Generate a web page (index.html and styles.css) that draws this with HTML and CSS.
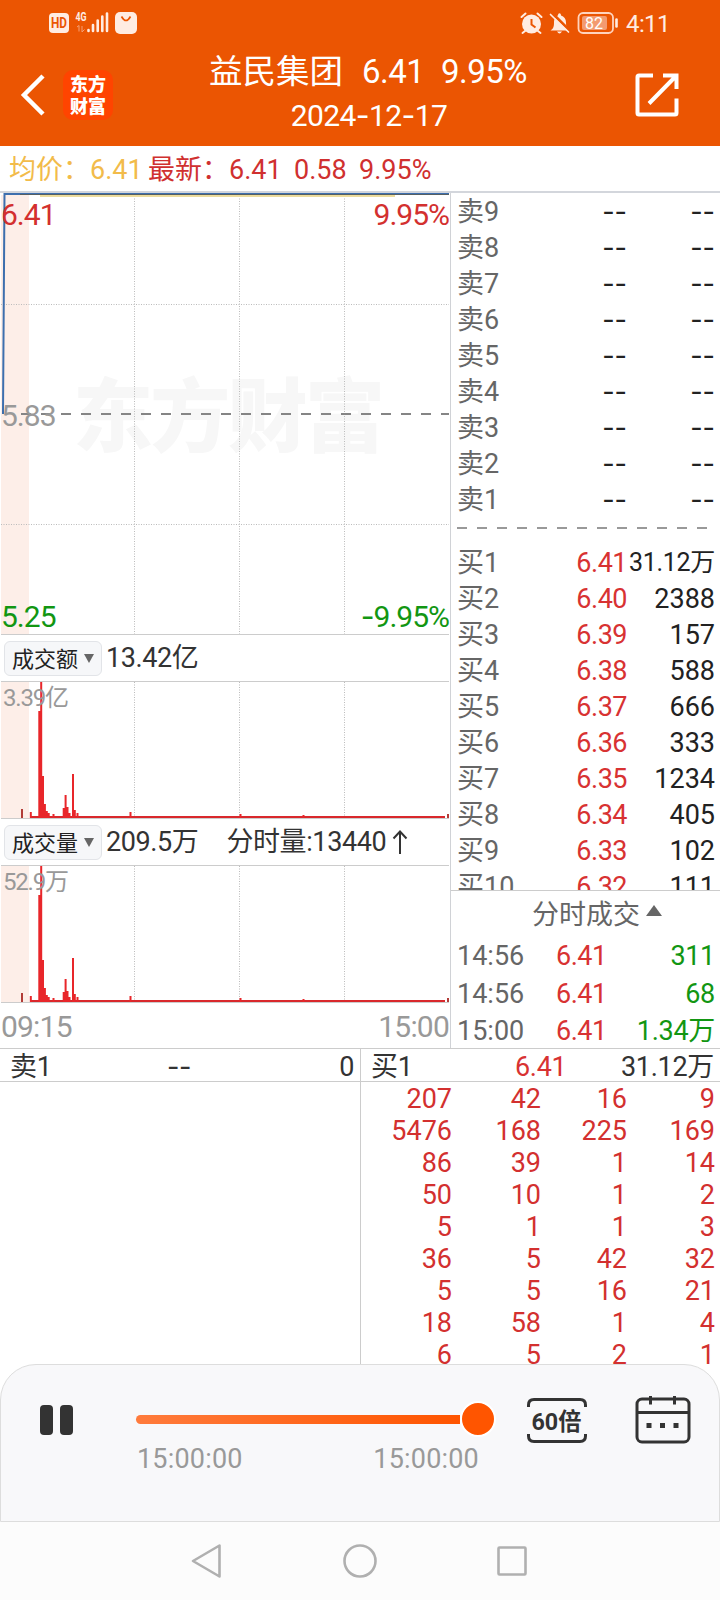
FILE: index.html
```
<!DOCTYPE html>
<html lang="zh-CN">
  <head>
    <meta charset="utf-8">
    <title>益民集团 6.41</title>
    <link rel="stylesheet" href="styles.css">
  </head>
  <body>
    <header>
      <div class="status">
        <svg width="90" height="24" viewBox="48 11 90 24">
          <rect x="49" y="13" width="20" height="20" rx="4" fill="#ffece2"/>
          <text x="51" y="28" class="hd" textLength="16" lengthAdjust="spacingAndGlyphs">HD</text>
          <text x="75.500" y="21" class="net" textLength="11" lengthAdjust="spacingAndGlyphs">4G</text>
          <path d="M77 27l2-1.500v6M82 26v6l2.500-2.500" stroke="#f4a077" fill="none"/>
          <path d="M88.500 30v1M93 25v6M97.700 20.500v10.500M102.300 16.500v14.500M107 13.500v17.500" stroke="#ffece2" stroke-width="2.600" stroke-linecap="round"/>
          <rect x="115" y="12" width="22" height="22" rx="5" fill="#ffece2"/>
          <path d="M121.500 16.500q4.500 8 9 0" stroke="#eb5502" stroke-width="1.600" fill="none"/>
        </svg>
        <svg width="98" height="24" viewBox="520 11 98 24">
          <circle cx="531.500" cy="24" r="9.500" fill="#ffece2"/>
          <path d="M521.500 17l4-3.500M541.500 17l-4-3.500M525 31l-2.500 2M538 31l2.500 2" stroke="#ffece2" stroke-width="2" stroke-linecap="round"/>
          <path d="M531.500 19v5.500l4 3" stroke="#eb5502" stroke-width="2" fill="none"/>
          <path d="M550.500 30.500c3-2 3.500-4 3.500-8 0-4 2-6.500 4-7 0-3 3-3 3 0 3 1 5 3.500 5 7s0.500 6 3 8zM557 31.500h5q-2.500 4-5 0z" fill="#ffece2"/>
          <path d="M551.500 12.500l18 18" stroke="#eb5502" stroke-width="3"/>
          <path d="M550.500 14.500l18 17.500" stroke="#ffece2" stroke-width="1.700" stroke-linecap="round"/>
          <rect x="578.500" y="13" width="34.500" height="20" rx="4.500" fill="none" stroke="#ffd3bd" stroke-width="1.800"/>
          <rect x="582" y="16" width="25" height="14" rx="2" fill="#f39a70"/>
          <text x="585" y="28.500" class="bat">82</text>
          <path d="M616.500 19.500v7" stroke="#ffece2" stroke-width="2.600" stroke-linecap="round"/>
        </svg>
        <span class="clock">4:11</span>
      </div>
      <div class="bar">
        <svg class="back" width="26" height="42" viewBox="0 0 26 42"><path d="M23 2L4 21l19 19" fill="none" stroke="#fff" stroke-width="4.500"/></svg>
        <div class="logo"><span>东方</span><span>财富</span></div>
        <div class="title">
          <div class="name"><span>益民集团</span><span>6.41</span><span>9.95%</span></div>
          <div class="date">2024<i>-</i>12<i>-</i>17</div>
        </div>
        <svg class="share" width="44" height="44" viewBox="0 0 44 44" fill="none" stroke="#fff" stroke-width="4">
          <path d="M18 2.500H4q-1.500 0-1.500 1.500v36q0 1.500 1.500 1.500h36q1.500 0 1.500-1.500V25.500M28 2.500h13.500V16M41 3L14 30.500"/>
        </svg>
      </div>
    </header>

    <div class="info">
      <span class="avg">均价：</span><span class="avg num1">6.41</span>
      <span class="last">最新：</span><span class="num2">6.41</span><span class="num3">0.58</span><span>9.95%</span>
    </div>

    <main>
      <section class="charts">
        <svg class="price" width="450" height="442" viewBox="0 193 450 442">
          <text x="73" y="445" class="mark" textLength="312">东方财富</text>
          <rect x="1" y="195" width="28" height="439" fill="#fdeee8"/>
          <path class="grid" d="M134.500 196v438M239.500 196v438M344.500 196v438M1 304.500h448M1 524.500h448"/>
          <path d="M21 414h428" stroke="#858585" stroke-width="2" stroke-dasharray="10 10"/>
          <path d="M40 196h355" stroke="#eddc9c" stroke-width="2"/>
          <path d="M3 414L4.500 194H449" stroke="#3d6fae" stroke-width="2" fill="none"/>
          <path d="M20 194.500H449" stroke="#555f63" stroke-width="1"/>
          <text x="1" y="225" class="up">6.41</text>
          <text x="449" y="225" class="up" text-anchor="end">9.95%</text>
          <text x="1" y="426" class="flat">5.83</text>
          <text x="1" y="627" class="down">5.25</text>
          <text x="449" y="627" class="down" text-anchor="end"><tspan class="dash">-</tspan>9.95%</text>
          <path d="M1 634.500h448" stroke="#ccc"/>
        </svg>
        <div class="head"><button>成交额<b></b></button><span>13.42亿</span></div>
        <svg width="450" height="138" viewBox="0 0 450 138">
          <defs>
            <g id="vol">
              <rect x="1" y="0" width="28" height="137" fill="#fdeee8"/>
              <path class="grid" d="M134.500 1v136M239.500 1v136M344.500 1v136"/>
              <path d="M1 .5h448M1 137.500h448" stroke="#ccc"/>
              <path d="M30 136H445" stroke="#d9282c" stroke-width="2"/>
              <path d="M30.800 137v-6M39.300 137v-107M41.200 137V1M43 137V95M44.900 137v-14M46.800 137v-7M48.700 137v-5M53.500 137v-4M63.700 137v-10M65.600 137v-23M67.500 137v-11M69.500 137v-5M73 137v-44M74.800 137v-8M77.500 137v-5M130.500 137v-6M240.500 137v-4M303.500 137v-3" stroke="#e8262a" stroke-width="2"/>
              <path d="M22 137v-9M448 137v-4" stroke="#b23c38" stroke-width="2"/>
            </g>
          </defs>
          <use href="#vol"/>
          <text x="3" y="25" class="max" textLength="66">3.39亿</text>
        </svg>
        <div class="head"><button>成交量<b></b></button><span>209.5万</span><span class="tick">分时量:13440<svg width="16" height="26" viewBox="0 0 16 26"><path d="M8 25V3M1.500 9.500L8 2.500l6.500 7" fill="none" stroke="#333" stroke-width="2"/></svg></span></div>
        <svg width="450" height="138" viewBox="0 0 450 138">
          <use href="#vol"/>
          <text x="3" y="25" class="max" textLength="66">52.9万</text>
        </svg>
        <div class="axis"><span>09:15</span><span>15:00</span></div>
      </section>

      <section class="book">
        <div class="levels">
          <div class="row"><span>卖9</span><i>--</i><i>--</i></div>
          <div class="row"><span>卖8</span><i>--</i><i>--</i></div>
          <div class="row"><span>卖7</span><i>--</i><i>--</i></div>
          <div class="row"><span>卖6</span><i>--</i><i>--</i></div>
          <div class="row"><span>卖5</span><i>--</i><i>--</i></div>
          <div class="row"><span>卖4</span><i>--</i><i>--</i></div>
          <div class="row"><span>卖3</span><i>--</i><i>--</i></div>
          <div class="row"><span>卖2</span><i>--</i><i>--</i></div>
          <div class="row"><span>卖1</span><i>--</i><i>--</i></div>
          <div class="split"></div>
          <div class="row"><span>买1</span><em>6.41</em><b class="small">31.12万</b></div>
          <div class="row"><span>买2</span><em>6.40</em><b>2388</b></div>
          <div class="row"><span>买3</span><em>6.39</em><b>157</b></div>
          <div class="row"><span>买4</span><em>6.38</em><b>588</b></div>
          <div class="row"><span>买5</span><em>6.37</em><b>666</b></div>
          <div class="row"><span>买6</span><em>6.36</em><b>333</b></div>
          <div class="row"><span>买7</span><em>6.35</em><b>1234</b></div>
          <div class="row"><span>买8</span><em>6.34</em><b>405</b></div>
          <div class="row"><span>买9</span><em>6.33</em><b>102</b></div>
          <div class="row"><span>买10</span><em>6.32</em><b>111</b></div>
        </div>
        <div class="deals">
          <div class="deals-title">分时成交<b></b></div>
          <div class="deal"><span>14:56</span><em>6.41</em><b>311</b></div>
          <div class="deal"><span>14:56</span><em>6.41</em><b>68</b></div>
          <div class="deal"><span>15:00</span><em>6.41</em><b>1.34万</b></div>
        </div>
      </section>
    </main>

    <div class="queue">
      <div class="sell">
        <div class="queue-head"><span>卖1</span><i>--</i><b>0</b></div>
      </div>
      <div class="buy">
        <div class="queue-head"><span>买1</span><em>6.41</em><b>31.12万</b></div>
        <div class="cells">
          <span>207</span><span>42</span><span>16</span><span>9</span>
          <span>5476</span><span>168</span><span>225</span><span>169</span>
          <span>86</span><span>39</span><span>1</span><span>14</span>
          <span>50</span><span>10</span><span>1</span><span>2</span>
          <span>5</span><span>1</span><span>1</span><span>3</span>
          <span>36</span><span>5</span><span>42</span><span>32</span>
          <span>5</span><span>5</span><span>16</span><span>21</span>
          <span>18</span><span>58</span><span>1</span><span>4</span>
          <span>6</span><span>5</span><span>2</span><span>1</span>
        </div>
      </div>
    </div>

    <div class="player">
      <div class="pause"><b></b><b></b></div>
      <div class="progress">
        <div class="slider"><div class="track"></div><div class="thumb"></div></div>
        <div class="times"><span>15:00:00</span><span>15:00:00</span></div>
      </div>
      <svg class="speed" width="60" height="48" viewBox="0 0 60 48">
        <path d="M1.500 10V8q0-5.500 5.500-5.500h46q5.500 0 5.500 5.500v2M1.500 37v2q0 5.500 5.500 5.500h46q5.500 0 5.500-5.500v-2" fill="none" stroke="#333" stroke-width="3"/>
        <text x="4.500" y="33" textLength="50" lengthAdjust="spacingAndGlyphs">60倍</text>
      </svg>
      <svg class="calendar" width="56" height="50" viewBox="0 0 56 50" fill="none" stroke="#333" stroke-width="3">
        <rect x="2" y="4" width="52" height="43" rx="5"/>
        <path d="M2 17.500h52M15.500 1v8.500M39.500 1v8.500"/>
        <path d="M11.500 30.500h5M25 30.500h5M38.500 30.500h5" stroke-width="5"/>
      </svg>
    </div>

    <nav>
      <svg width="34" height="38" viewBox="0 0 34 38"><path d="M3 19L29.500 3.500v31z"/></svg>
      <svg width="36" height="38" viewBox="0 0 36 38"><circle cx="18" cy="19" r="15.500"/></svg>
      <svg width="34" height="38" viewBox="0 0 34 38"><rect x="3.500" y="5.500" width="27" height="27" rx="1"/></svg>
    </nav>
  </body>
</html>
```
FILE: styles.css
```
* {
  box-sizing: border-box;
}
body {
  margin: 0;
  width: 720px;
  height: 1600px;
  overflow: hidden;
  display: flex;
  flex-direction: column;
  background-color: #fff;
  color: #333;
  font-family: Roboto, "Noto Sans CJK SC", sans-serif;
  font-size: 27px;
}
svg {
  display: block;
  flex: none;
}
i, em, b {
  font-style: normal;
  font-weight: normal;
}
i, .dash {
  font-family: Inter, sans-serif;
}

/* header */
header {
  height: 146px;
  background-color: #eb5502;
  color: #fff;
}
.status {
  display: flex;
  height: 46px;
  padding: 11px 0 0 48px;
}
.status svg:nth-child(2) {
  margin-left: 382px;
}
.clock {
  margin-left: 8px;
  font-size: 24px;
  line-height: 26px;
  letter-spacing: -0.600px;
  color: #ffece2;
}
.hd {
  font-size: 14px;
  font-weight: bold;
  fill: #eb5502;
}
.net {
  font-size: 12px;
  font-weight: bold;
  fill: #ffece2;
}
.bat {
  font-size: 16px;
  fill: #fff;
}
.bar {
  display: flex;
}
.back {
  margin: 28px 0 0 20px;
}
.logo {
  display: flex;
  flex-direction: column;
  width: 50px;
  height: 50px;
  margin: 24px 0 0 17px;
  padding-top: 2px;
  border-radius: 10px;
  background-color: #ff4400;
  font-family: "Noto Sans CJK SC", sans-serif;
  font-size: 18px;
  font-weight: 900;
  line-height: 22px;
  text-align: center;
}
.title {
  width: 330px;
  margin-left: 91px;
}
.name {
  display: flex;
  padding-left: 5px;
  font-size: 33.500px;
  line-height: 52px;
}
.name span:nth-child(2) {
  width: 79px;
  margin-left: 19px;
  font-size: 33px;
  letter-spacing: -0.500px;
}
.name span:nth-child(3) {
  font-size: 33px;
  letter-spacing: -0.500px;
}
.date {
  font-size: 30px;
  line-height: 35px;
  letter-spacing: -0.600px;
  text-align: center;
}
.share {
  margin: 27px 0 0 101px;
}

.info {
  display: flex;
  height: 47px;
  padding-left: 9px;
  border-bottom: 2px solid #d3d6dc;
  color: #d0302f;
  font-size: 27px;
  line-height: 49px;
}
.avg {
  color: #f2bb4a;
}
.avg:first-child {
  width: 81px;
}
.num1 {
  width: 58px;
}
.last {
  width: 81px;
}
.num2, .num3 {
  width: 65px;
}

/* charts */
main {
  display: flex;
  height: 856px;
  border-bottom: 1px solid #ccc;
}
.charts {
  width: 451px;
  border-right: 1px solid #d0d2d6;
}
.grid {
  stroke: #bbb;
  stroke-dasharray: 1 1.500;
  fill: none;
}
.price text {
  font-size: 30px;
  letter-spacing: -1px;
}
.price .mark {
  fill: #f7f7f7;
  font-size: 80px;
  font-weight: 900;
  letter-spacing: 0;
}
.up {
  fill: #d3302f;
}
.flat {
  fill: #999;
}
.down {
  fill: #129612;
}
.max {
  fill: #999;
  font-size: 24px;
}
.head {
  display: flex;
  align-items: center;
  height: 46px;
  padding-left: 4px;
  line-height: 40px;
  letter-spacing: -0.400px;
}
.head button {
  display: flex;
  align-items: center;
  justify-content: space-between;
  width: 98px;
  height: 35px;
  margin-right: 4px;
  padding: 0 7px 3px;
  border: 1px solid #e2e4e8;
  border-radius: 6px;
  background-color: #f6f7f9;
  color: #222;
  font-family: "Noto Sans CJK SC", sans-serif;
  font-size: 22px;
}
.head button b {
  margin-top: 3px;
  border: 5.500px solid transparent;
  border-top: 9px solid #666;
  border-bottom: 0;
}
.tick {
  display: flex;
  align-items: center;
  margin-left: 28px;
}
.tick svg {
  margin-left: 6px;
}
.axis {
  display: flex;
  justify-content: space-between;
  height: 47px;
  padding: 0 1px;
  color: #999;
  font-size: 30px;
  line-height: 48px;
  letter-spacing: -0.800px;
}

/* order book */
.book {
  width: 269px;
}
.levels {
  height: 697px;
  overflow: hidden;
}
.row {
  display: grid;
  grid-template-columns: 70px 100px 88px;
  height: 36px;
  padding-left: 6px;
  line-height: 38px;
}
.row span, .deal span {
  color: #666;
}
.row i, .row em, .row b, .deal b {
  text-align: right;
}
.row i {
  color: #222;
}
.row em, .deal em, .queue em {
  color: #d83232;
}
.row em, .deal em {
  letter-spacing: -0.500px;
}
.row b {
  color: #222;
}
.row .small {
  font-size: 25px;
  letter-spacing: -0.300px;
}
.split {
  height: 27px;
  margin-left: 6px;
  background: repeating-linear-gradient(90deg, #999 0 10px, #fff 10px 20px) 0 10px / 250px 2px no-repeat;
}
.deals {
  border-top: 1px solid #ccc;
}
.deals-title {
  display: flex;
  align-items: center;
  height: 46px;
  padding: 0 0 4px 81px;
  color: #666;
}
.deals-title b {
  margin: -4px 0 0 6px;
  border: 8px solid transparent;
  border-bottom: 11px solid #666;
  border-top: 0;
}
.deal {
  display: grid;
  grid-template-columns: 99px 60px 99px;
  height: 37.500px;
  padding-left: 6px;
  line-height: 38px;
}
.deal b {
  color: #129612;
  letter-spacing: -0.300px;
}

/* order queue */
.queue {
  display: flex;
  height: 315px;
  overflow: hidden;
}
.sell {
  width: 361px;
  border-right: 1px solid #ccc;
}
.buy {
  width: 359px;
}
.queue-head {
  display: flex;
  height: 33px;
  padding: 0 6px 0 10px;
  border-bottom: 1px solid #ccc;
  line-height: 36px;
  letter-spacing: -0.300px;
}
.queue-head span {
  width: 144px;
}
.queue-head i {
  margin-left: 13px;
}
.queue-head b {
  margin-left: auto;
}
.cells {
  display: grid;
  grid-template-columns: 91px 89px 86px 88px;
  grid-auto-rows: 32px;
  line-height: 35px;
  text-align: right;
  color: #d3302f;
}

/* replay controls */
.player {
  display: flex;
  height: 158px;
  border: 1px solid #ddd;
  border-radius: 36px 36px 0 0;
  background-color: #f8f8fa;
}
.pause {
  display: flex;
  gap: 7px;
  margin: 40px 0 0 39px;
}
.pause b {
  width: 13px;
  height: 30px;
  border-radius: 4px;
  background-color: #333;
}
.progress {
  width: 360px;
  margin: 36px 0 0 63px;
}
.slider {
  display: flex;
  align-items: center;
  height: 36px;
}
.track {
  width: 324px;
  height: 9px;
  border-radius: 5px 0 0 5px;
  background: linear-gradient(90deg, #ff7b3c, #ff5500);
}
.thumb {
  width: 36px;
  height: 36px;
  border: 2px solid #fff;
  border-radius: 50%;
  background-color: #ff5500;
}
.times {
  display: flex;
  justify-content: space-between;
  padding: 5px 17px 0 1px;
  color: #999;
  line-height: 34px;
  letter-spacing: 0.200px;
}
.speed {
  margin: 32px 0 0 31px;
}
.speed text {
  fill: #333;
  font-size: 24px;
  font-weight: bold;
}
.calendar {
  margin: 30px 0 0 48px;
}
nav {
  display: flex;
  height: 78px;
  padding: 20px 0 0 190px;
  background-color: #fcfcfc;
}
nav svg {
  fill: none;
  stroke: #b0b0b0;
  stroke-width: 2.600;
  stroke-linejoin: round;
}
nav svg:nth-child(2) {
  margin: 0 117px 0 118px;
}
```
